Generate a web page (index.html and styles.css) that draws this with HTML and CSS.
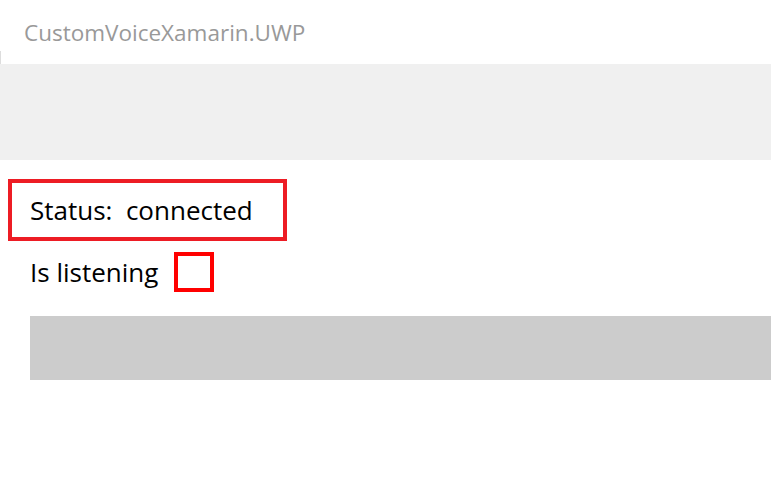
FILE: index.html
```html
<!DOCTYPE html>
<html lang="en">
<head>
<meta charset="utf-8">
<title>CustomVoiceXamarin.UWP</title>
<link rel="stylesheet" href="styles.css">
</head>
<body>
<header class="titlebar">
  <div class="app-title">CustomVoiceXamarin.UWP</div>
  <div class="edge"></div>
</header>
<div class="navbar"></div>
<main class="content">
  <div class="status-box">
    <span class="label">Status:&nbsp; connected</span>
  </div>
  <div class="listen-row">
    <span class="label">Is listening</span>
    <span class="checkbox"></span>
  </div>
  <div class="grey-bar"></div>
</main>
</body>
</html>
```
FILE: styles.css
```css
html, body {
  margin: 0;
  padding: 0;
  background: #ffffff;
  font-family: "Open Sans", "Noto Sans", "Liberation Sans", sans-serif;
}
.titlebar {
  height: 64px;
  display: flex;
  flex-direction: column;
}
.app-title {
  padding-left: 24px;
  padding-top: 18px;
  font-size: 22.5px;
  line-height: 30px;
  color: #999999;
}
.edge {
  margin-top: auto;
  width: 1px;
  height: 13px;
  background: #dddddd;
}
.navbar {
  height: 96px;
  background: #f0f0f0;
}
.content {
  padding-left: 8px;
  padding-top: 19px;
  display: flex;
  flex-direction: column;
}
.label {
  font-size: 26px;
  color: #000000;
}
.status-box {
  box-sizing: border-box;
  width: 279px;
  height: 62px;
  border: 4px solid #ed1c24;
  padding-left: 18px;
  display: flex;
  align-items: center;
}
.listen-row {
  margin-top: 11px;
  padding-left: 22px;
  display: flex;
  align-items: center;
  height: 40px;
}
.checkbox {
  box-sizing: border-box;
  width: 40px;
  height: 40px;
  border: 4px solid #ff0000;
  margin-left: 16px;
}
.grey-bar {
  margin-top: 24px;
  margin-left: 22px;
  height: 64px;
  background: #cccccc;
}
```
